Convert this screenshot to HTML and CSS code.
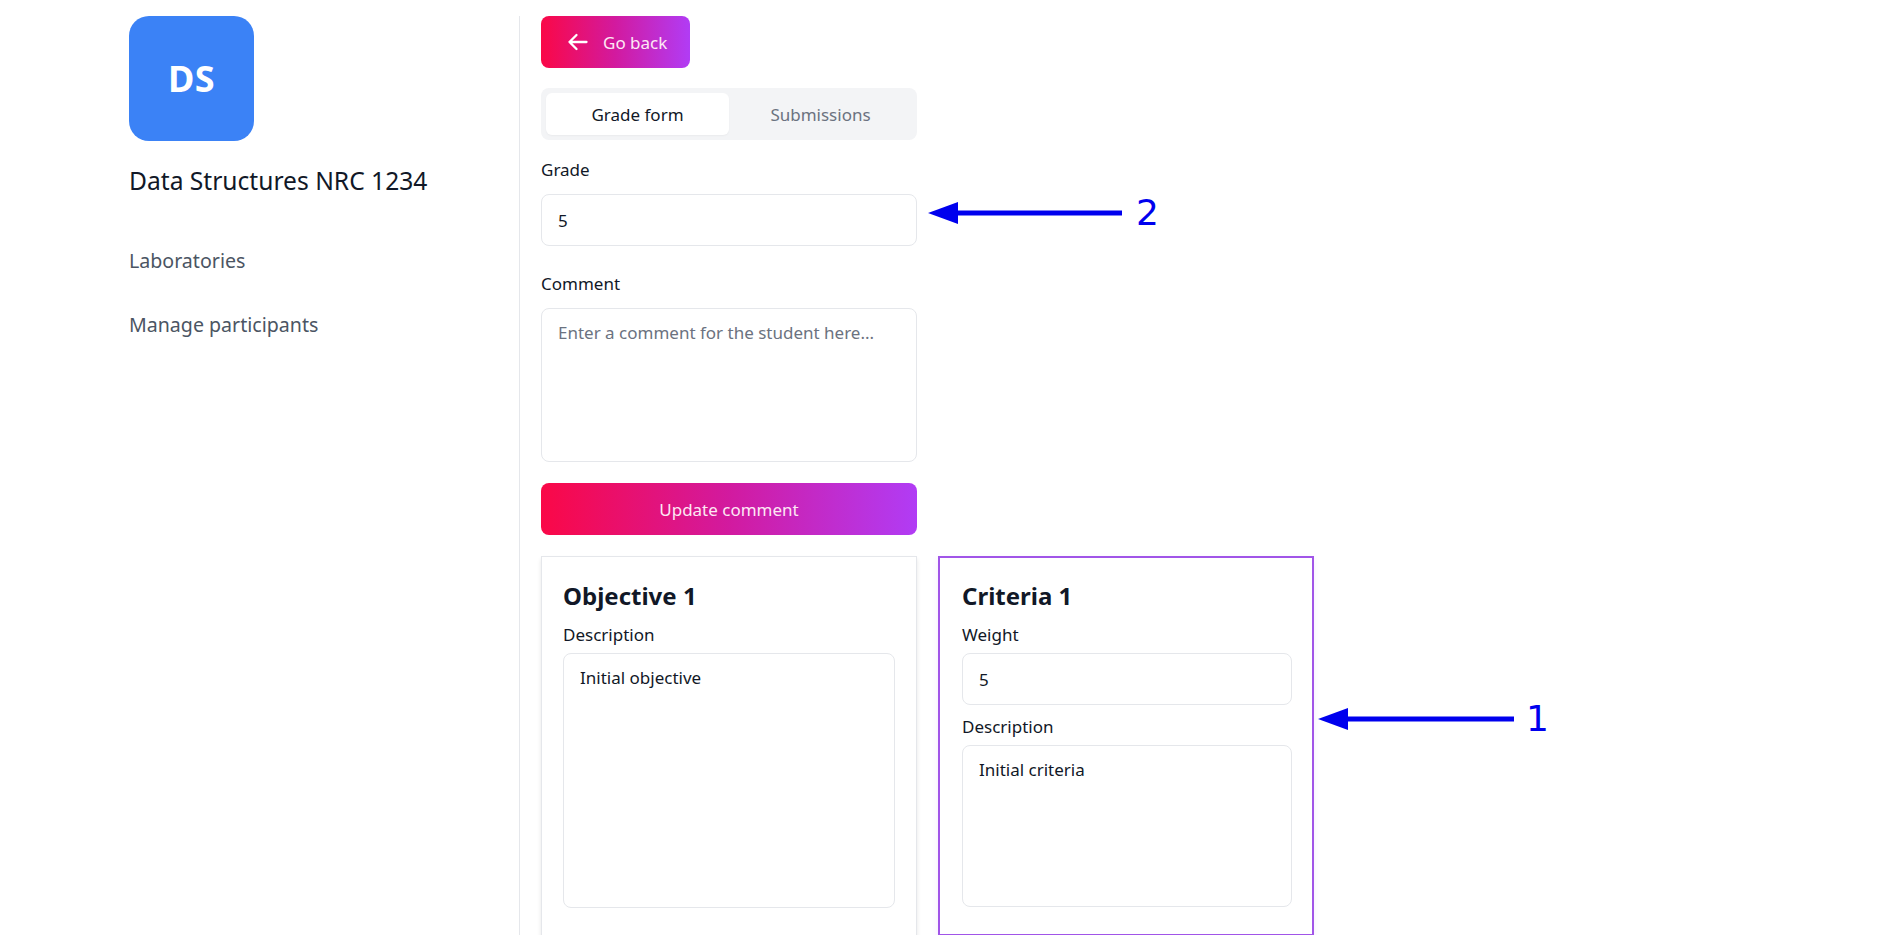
FILE: index.html
```html
<!DOCTYPE html>
<html lang="en">
<head>
<meta charset="utf-8">
<title>Grade form</title>
<link rel="stylesheet" href="styles.css">
</head>
<body>
<div class="page">
  <aside class="sidebar">
    <div class="avatar">DS</div>
    <h1 class="course">Data Structures NRC 1234</h1>
    <nav class="nav">
      <a class="nav-link">Laboratories</a>
      <a class="nav-link">Manage participants</a>
    </nav>
  </aside>
  <main class="main">
    <button class="btn btn-back">
      <svg class="back-icon" viewBox="0 0 24 24" width="24" height="24" fill="none" stroke="currentColor" stroke-width="2.3" stroke-linecap="round" stroke-linejoin="round"><path d="M20.5 12H3.5M10.5 5l-7 7 7 7"/></svg>
      <span>Go back</span>
    </button>
    <div class="tabs">
      <div class="tab tab-active">Grade form</div>
      <div class="tab">Submissions</div>
    </div>
    <div class="field field-grade">
      <label class="label">Grade</label>
      <div class="input">5</div>
    </div>
    <div class="field field-comment">
      <label class="label">Comment</label>
      <div class="textarea placeholder">Enter a comment for the student here...</div>
    </div>
    <button class="btn btn-update">Update comment</button>
    <div class="cards">
      <section class="card">
        <h2 class="card-title">Objective 1</h2>
        <label class="label label-tight">Description</label>
        <div class="textarea textarea-objective">Initial objective</div>
      </section>
      <section class="card card-selected">
        <h2 class="card-title">Criteria 1</h2>
        <label class="label label-tight">Weight</label>
        <div class="input input-weight">5</div>
        <label class="label label-tight">Description</label>
        <div class="textarea textarea-criteria">Initial criteria</div>
      </section>
    </div>
  </main>
</div>
<div class="annot annot-2">
  <svg width="200" height="24" viewBox="0 0 200 24"><polygon points="0,12 30,1 30,23" fill="#0000ee"/><rect x="26" y="9.5" width="168" height="5" fill="#0000ee"/></svg>
  <span class="annot-num">2</span>
</div>
<div class="annot annot-1">
  <svg width="200" height="24" viewBox="0 0 200 24"><polygon points="0,12 30,1 30,23" fill="#0000ee"/><rect x="26" y="9.5" width="170" height="5" fill="#0000ee"/></svg>
  <span class="annot-num">1</span>
</div>
</body>
</html>
```
FILE: styles.css
```css
* { box-sizing: border-box; }
html, body { margin: 0; padding: 0; background: #ffffff; }
body {
  font-family: "Noto Sans", "Open Sans", sans-serif;
  color: #111827;
  font-size: 17px;
  height: 935px;
  overflow: hidden;
  position: relative;
}
.page {
  display: flex;
  padding-top: 16px;
  min-height: 935px;
}
.sidebar {
  width: 520px;
  flex: none;
  padding-left: 129px;
  border-right: 1px solid #e5e7eb;
}
.avatar {
  width: 125px;
  height: 125px;
  border-radius: 20px;
  background: #3b82f6;
  color: #ffffff;
  font-weight: 700;
  font-size: 36px;
  display: flex;
  align-items: center;
  justify-content: center;
  letter-spacing: 0.5px;
}
.course {
  margin: 23px 0 0;
  font-size: 24.6px;
  font-weight: 400;
  line-height: 34px;
  color: #111827;
}
.nav {
  display: flex;
  flex-direction: column;
  gap: 30px;
  margin-top: 46px;
}
.nav-link {
  font-size: 19.6px;
  line-height: 34px;
  color: #4b5563;
}
.main {
  padding-left: 21px;
  width: 1000px;
}
.btn {
  border: 0;
  font-family: inherit;
  color: #fde8f4;
  background: linear-gradient(90deg, #fa0847 0%, #d21a9f 50%, #b13cf5 100%);
  border-radius: 8px;
  height: 52px;
  font-size: 17px;
  cursor: pointer;
}
.btn-back {
  display: flex;
  align-items: center;
  gap: 13px;
  width: 149px;
  padding: 0 0 0 25px;
}
.back-icon { color: #ffffff; flex: none; }
.tabs {
  margin-top: 20px;
  width: 376px;
  height: 52px;
  padding: 5px;
  background: #f3f4f6;
  border-radius: 8px;
  display: grid;
  grid-template-columns: 1fr 1fr;
}
.tab {
  display: flex;
  align-items: center;
  justify-content: center;
  color: #6b7280;
  border-radius: 6px;
  font-size: 17px;
}
.tab-active {
  background: #ffffff;
  color: #111827;
  box-shadow: 0 1px 2px rgba(0,0,0,0.04);
}
.field { width: 376px; }
.field-grade { margin-top: 18px; }
.field-comment { margin-top: 26px; }
.label {
  display: block;
  font-size: 17px;
  line-height: 24px;
  margin-bottom: 12px;
  color: #111827;
}
.label-tight { margin-bottom: 6px; }
.input {
  height: 52px;
  border: 1px solid #e5e7eb;
  border-radius: 8px;
  padding: 0 16px;
  display: flex;
  align-items: center;
  font-size: 17px;
  color: #111827;
}
.textarea {
  border: 1px solid #e5e7eb;
  border-radius: 8px;
  padding: 11px 16px;
  font-size: 17px;
  line-height: 26px;
  color: #111827;
}
.field-comment .textarea { height: 154px; }
.placeholder { color: #6b7280; }
.btn-update {
  display: block;
  margin-top: 21px;
  width: 376px;
  text-align: center;
}
.cards {
  margin-top: 21px;
  display: grid;
  grid-template-columns: 376px 376px;
  column-gap: 21px;
}
.card {
  border: 1px solid #e5e7eb;
  padding: 23px 21px 21px;
  height: 380px;
  box-shadow: 0 3px 4px rgba(0,0,0,0.10);
}
.card-selected {
  border: 2px solid #a155e8;
  padding: 22px 20px 20px 22px;
  box-shadow: 0 3px 6px rgba(168,85,247,0.12);
}
.card-title {
  margin: 0 0 11px;
  font-size: 24px;
  line-height: 32px;
  font-weight: 700;
  color: #111827;
}
.textarea-objective { height: 255px; }
.input-weight { margin-bottom: 10px; }
.textarea-criteria { height: 162px; }
.annot {
  position: absolute;
  display: flex;
  align-items: center;
  gap: 8px;
  color: #0000ee;
}
.annot-num {
  font-size: 36px;
  line-height: 40px;
  font-family: "DejaVu Sans", sans-serif;
}
.annot-2 { left: 928px; top: 193px; }
.annot-1 { left: 1318px; top: 699px; }
```
